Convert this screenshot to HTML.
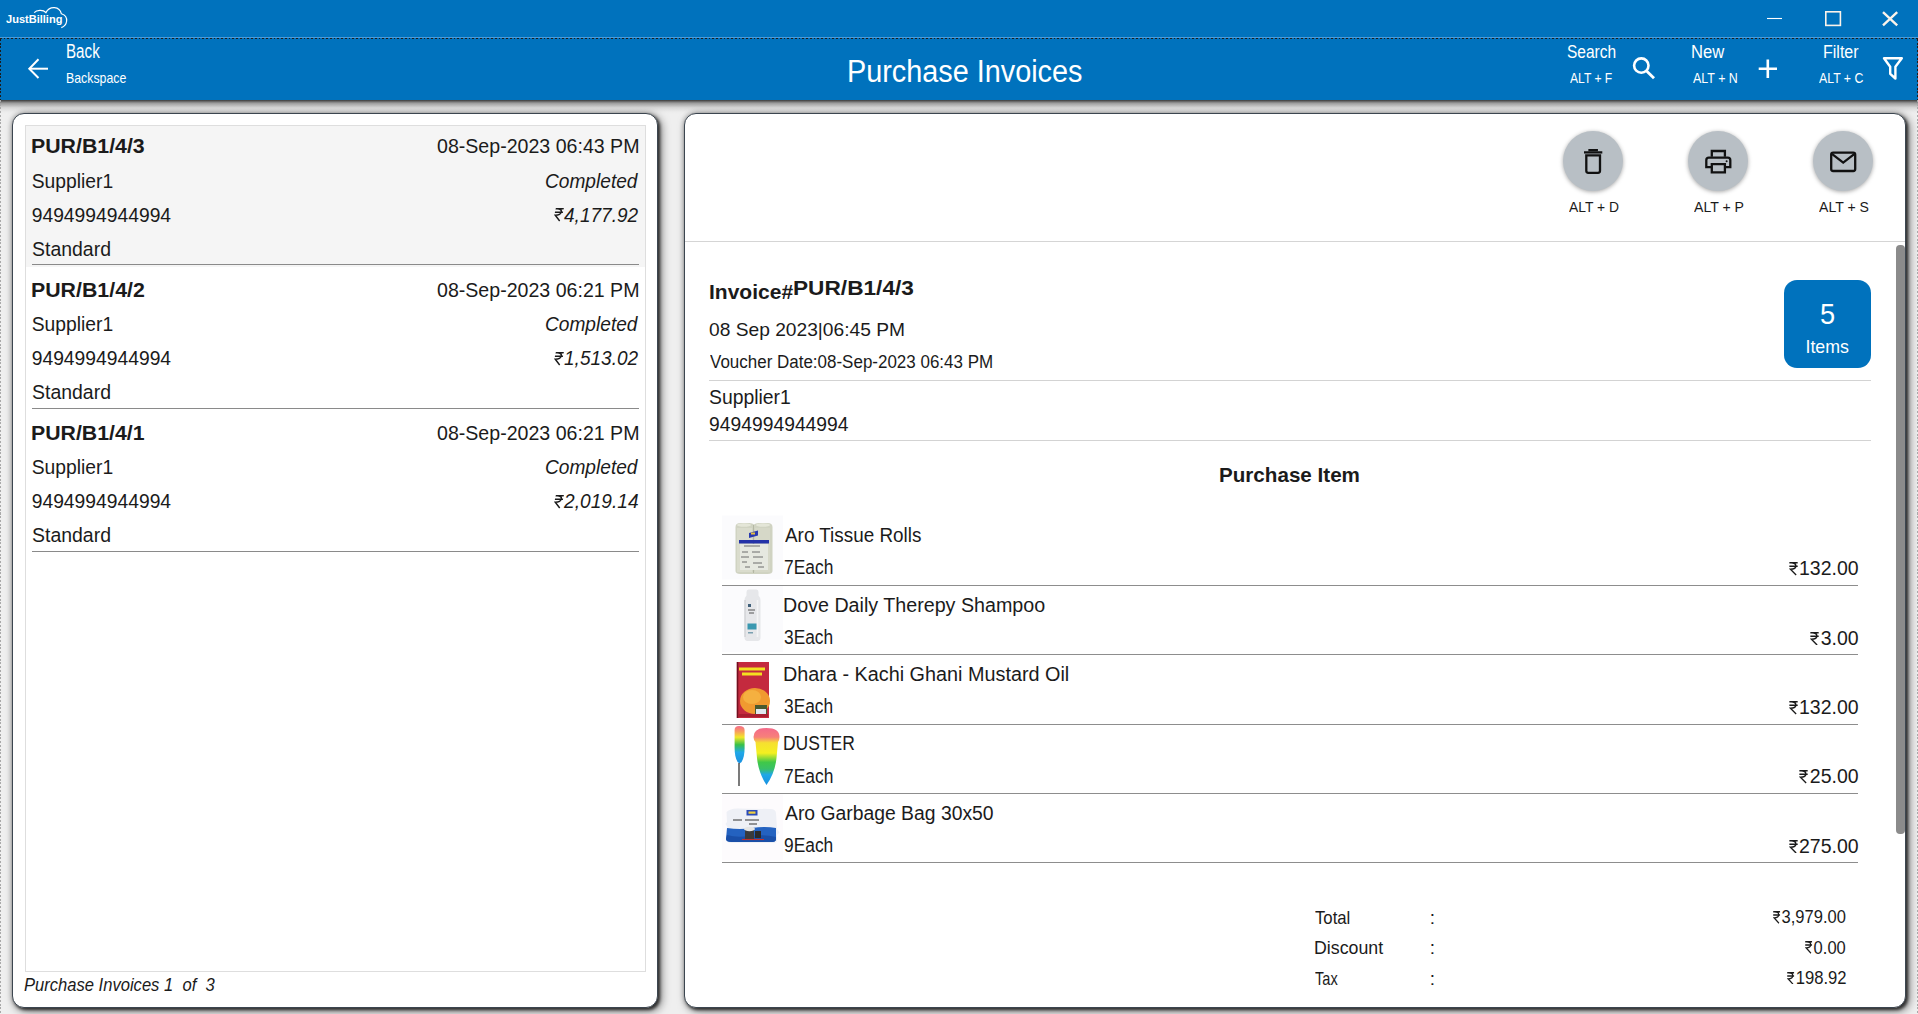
<!DOCTYPE html>
<html><head><meta charset="utf-8"><title>Purchase Invoices</title>
<style>
html,body{margin:0;padding:0;width:1918px;height:1014px;overflow:hidden;background:#efefef}
body{position:relative;font-family:"Liberation Sans", sans-serif}
.t{position:absolute;white-space:nowrap;transform-origin:0 0;font-family:"Liberation Sans", sans-serif}
</style></head><body>
<div style="position:absolute;left:0;top:0;width:1918px;height:1014px;background:#efefef;overflow:hidden">
<div style="position:absolute;left:0px;top:100px;width:1918px;height:14px;background:linear-gradient(#3a3a3a,#9a9a9a 22%,#d8d8d8 55%,#ececec 85%,#efefef)"></div>
<div style="position:absolute;left:0px;top:0px;width:1918px;height:100px;background:#0072BD"></div>
<div style="position:absolute;left:0px;top:37px;width:1918px;height:1px;background:#4f9bd6"></div>
<div style="position:absolute;left:0px;top:38px;width:1918px;height:1px;background:repeating-linear-gradient(90deg,#1c1c1c 0 1.6px,transparent 1.6px 3.75px)"></div>
<div style="position:absolute;left:0px;top:39px;width:1px;height:61px;background:repeating-linear-gradient(180deg,#1c1c1c 0 2px,transparent 2px 3.75px)"></div>
<div style="position:absolute;left:1917px;top:39px;width:1px;height:61px;background:repeating-linear-gradient(180deg,#1c1c1c 0 2px,transparent 2px 3.75px)"></div>
<div style="position:absolute;left:12px;top:113px;width:646px;height:895px;background:#fff;border:1.5px solid #3c4650;border-radius:12px;box-sizing:border-box;box-shadow:2px 2px 3px rgba(0,0,0,.6),3px 3px 10px rgba(0,0,0,.55),0 0 5px rgba(0,0,0,.3);"></div>
<div style="position:absolute;left:684px;top:113px;width:1222px;height:895px;background:#fff;border:1.5px solid #3c4650;border-radius:12px;box-sizing:border-box;box-shadow:2px 2px 3px rgba(0,0,0,.6),3px 3px 10px rgba(0,0,0,.55),0 0 5px rgba(0,0,0,.3);"></div>
<div style="position:absolute;left:0px;top:100px;width:1px;height:914px;background:repeating-linear-gradient(180deg,#a9a9a9 0 2px,transparent 2px 3.75px)"></div>
<div style="position:absolute;left:1917px;top:100px;width:1px;height:914px;background:repeating-linear-gradient(180deg,#a9a9a9 0 2px,transparent 2px 3.75px)"></div>
<div style="position:absolute;left:25px;top:125px;width:621px;height:847px;border:1px solid #dedede;box-sizing:border-box;background:#fff"></div>
<div style="position:absolute;left:26px;top:126px;width:619px;height:141px;background:#f5f5f5"></div>
<div class="t" style="left:31.17px;top:137.46px;font-size:19.3px;line-height:19.3px;color:#1b1b1b;font-weight:bold;transform:scaleX(1.1051);">PUR/B1/4/3</div>
<div class="t" style="left:437.23px;top:137.46px;font-size:19.3px;line-height:19.3px;color:#1b1b1b;transform:scaleX(1.0156);">08-Sep-2023 06:43 PM</div>
<div class="t" style="left:31.72px;top:171.56px;font-size:19.3px;line-height:19.3px;color:#1b1b1b;">Supplier1</div>
<div class="t" style="left:545.24px;top:171.56px;font-size:19.3px;line-height:19.3px;color:#1b1b1b;font-style:italic;transform:scaleX(0.9916);">Completed</div>
<div class="t" style="left:31.69px;top:205.56px;font-size:19.3px;line-height:19.3px;color:#1b1b1b;">9494994944994</div>
<div class="t" style="left:553.42px;top:205.56px;font-size:19.3px;line-height:19.3px;color:#1b1b1b;padding-left:11.19px;font-style:italic;transform:scaleX(0.9866);"><svg style="position:absolute;left:0.90px;top:2.83px;width:8.96px;height:13.51px;transform:skewX(-12deg);" viewBox="0 0 10 14" preserveAspectRatio="none"><path d="M0.4 0.8H9.6M0.4 4.4H9.6M2.4 0.8c3.8 0 5.2 1.1 5.2 3.4S5.9 7.5 1.6 7.5L7.9 13.4" fill="none" stroke="currentColor" stroke-width="1.5"/></svg>4,177.92</div>
<div class="t" style="left:31.72px;top:239.56px;font-size:19.3px;line-height:19.3px;color:#1b1b1b;transform:scaleX(1.0090);">Standard</div>
<div style="position:absolute;left:32px;top:264px;width:607px;height:1.4px;background:#8a8a8a"></div>
<div class="t" style="left:31.17px;top:280.66px;font-size:19.3px;line-height:19.3px;color:#1b1b1b;font-weight:bold;transform:scaleX(1.1059);">PUR/B1/4/2</div>
<div class="t" style="left:437.23px;top:280.66px;font-size:19.3px;line-height:19.3px;color:#1b1b1b;transform:scaleX(1.0156);">08-Sep-2023 06:21 PM</div>
<div class="t" style="left:31.72px;top:314.76px;font-size:19.3px;line-height:19.3px;color:#1b1b1b;">Supplier1</div>
<div class="t" style="left:545.24px;top:314.76px;font-size:19.3px;line-height:19.3px;color:#1b1b1b;font-style:italic;transform:scaleX(0.9916);">Completed</div>
<div class="t" style="left:31.69px;top:348.76px;font-size:19.3px;line-height:19.3px;color:#1b1b1b;">9494994944994</div>
<div class="t" style="left:553.42px;top:348.76px;font-size:19.3px;line-height:19.3px;color:#1b1b1b;padding-left:11.19px;font-style:italic;transform:scaleX(0.9866);"><svg style="position:absolute;left:0.90px;top:2.83px;width:8.96px;height:13.51px;transform:skewX(-12deg);" viewBox="0 0 10 14" preserveAspectRatio="none"><path d="M0.4 0.8H9.6M0.4 4.4H9.6M2.4 0.8c3.8 0 5.2 1.1 5.2 3.4S5.9 7.5 1.6 7.5L7.9 13.4" fill="none" stroke="currentColor" stroke-width="1.5"/></svg>1,513.02</div>
<div class="t" style="left:31.72px;top:382.76px;font-size:19.3px;line-height:19.3px;color:#1b1b1b;transform:scaleX(1.0090);">Standard</div>
<div style="position:absolute;left:32px;top:408px;width:607px;height:1.4px;background:#8a8a8a"></div>
<div class="t" style="left:31.18px;top:423.86px;font-size:19.3px;line-height:19.3px;color:#1b1b1b;font-weight:bold;transform:scaleX(1.1034);">PUR/B1/4/1</div>
<div class="t" style="left:437.23px;top:423.86px;font-size:19.3px;line-height:19.3px;color:#1b1b1b;transform:scaleX(1.0156);">08-Sep-2023 06:21 PM</div>
<div class="t" style="left:31.72px;top:457.96px;font-size:19.3px;line-height:19.3px;color:#1b1b1b;">Supplier1</div>
<div class="t" style="left:545.24px;top:457.96px;font-size:19.3px;line-height:19.3px;color:#1b1b1b;font-style:italic;transform:scaleX(0.9916);">Completed</div>
<div class="t" style="left:31.69px;top:491.96px;font-size:19.3px;line-height:19.3px;color:#1b1b1b;">9494994944994</div>
<div class="t" style="left:553.41px;top:491.96px;font-size:19.3px;line-height:19.3px;color:#1b1b1b;padding-left:11.19px;font-style:italic;transform:scaleX(0.9917);"><svg style="position:absolute;left:0.90px;top:2.83px;width:8.96px;height:13.51px;transform:skewX(-12deg);" viewBox="0 0 10 14" preserveAspectRatio="none"><path d="M0.4 0.8H9.6M0.4 4.4H9.6M2.4 0.8c3.8 0 5.2 1.1 5.2 3.4S5.9 7.5 1.6 7.5L7.9 13.4" fill="none" stroke="currentColor" stroke-width="1.5"/></svg>2,019.14</div>
<div class="t" style="left:31.72px;top:525.96px;font-size:19.3px;line-height:19.3px;color:#1b1b1b;transform:scaleX(1.0090);">Standard</div>
<div style="position:absolute;left:32px;top:551px;width:607px;height:1.4px;background:#8a8a8a"></div>
<div class="t" style="left:24.49px;top:974.92px;font-size:19px;line-height:19px;color:#1b1b1b;font-style:italic;transform:scaleX(0.8721);">Purchase Invoices 1&nbsp; of&nbsp; 3</div>
<div style="position:absolute;left:685px;top:241px;width:1220px;height:1px;background:#d5d5d5"></div>
<div style="position:absolute;left:1563px;top:131px;width:60px;height:60px;border-radius:50%;background:#b8bfc5;box-shadow:0 1px 4px rgba(0,0,0,.35)"></div>
<div class="t" style="left:1568.72px;top:198.90px;font-size:15px;line-height:15px;color:#1b1b1b;transform:scaleX(0.9234);">ALT + D</div>
<div style="position:absolute;left:1688px;top:131px;width:60px;height:60px;border-radius:50%;background:#b8bfc5;box-shadow:0 1px 4px rgba(0,0,0,.35)"></div>
<div class="t" style="left:1693.72px;top:198.90px;font-size:15px;line-height:15px;color:#1b1b1b;transform:scaleX(0.9389);">ALT + P</div>
<div style="position:absolute;left:1813px;top:131px;width:60px;height:60px;border-radius:50%;background:#b8bfc5;box-shadow:0 1px 4px rgba(0,0,0,.35)"></div>
<div class="t" style="left:1818.72px;top:198.90px;font-size:15px;line-height:15px;color:#1b1b1b;transform:scaleX(0.9371);">ALT + S</div>
<svg style="position:absolute;left:0;top:0" width="1918" height="240" viewBox="0 0 1918 240">
<g fill="none" stroke="#111" stroke-width="2.3">
<path d="M1584 152.4H1602.3"/><path d="M1589.5 151.2V150.2H1596.8V151.2"/>
<path d="M1586.3 155.4V170.8q0 2 2 2H1598q2 0 2-2V155.4Z"/>
<path d="M1711.8 156.8V151H1724.9V156.8"/>
<path d="M1711.8 167.2H1706.3V160.3q0-2.6 2.6-2.6H1727.7q2.6 0 2.6 2.6V167.2H1724.9"/>
<path d="M1711.8 164.2H1724.9V172.4H1711.8Z"/>
<path d="M1831.2 154.6q0-2 2-2H1853.2q2 0 2 2V169q0 2-2 2H1833.2q-2 0-2-2Z"/>
<path d="M1832.2 154.2L1843.2 162.6L1854.2 154.2"/>
</g>
<circle cx="1726.6" cy="161.2" r="1" fill="#111"/>
</svg>
<div style="position:absolute;left:1896px;top:245px;width:9px;height:589px;background:#8b8b8b;border-radius:4px"></div>
<div class="t" style="left:708.59px;top:282.26px;font-size:20.6px;line-height:20.6px;color:#1b1b1b;font-weight:bold;transform:scaleX(1.0207);">Invoice#</div>
<div class="t" style="left:793.08px;top:278.46px;font-size:20.6px;line-height:20.6px;color:#1b1b1b;font-weight:bold;transform:scaleX(1.1003);">PUR/B1/4/3</div>
<div class="t" style="left:709.25px;top:321.26px;font-size:18.6px;line-height:18.6px;color:#1b1b1b;transform:scaleX(1.0320);">08 Sep 2023|06:45 PM</div>
<div class="t" style="left:709.93px;top:353.46px;font-size:18px;line-height:18px;color:#1b1b1b;transform:scaleX(0.9431);">Voucher Date:08-Sep-2023 06:43 PM</div>
<div style="position:absolute;left:709px;top:380px;width:1162px;height:1px;background:#d3d3d3"></div>
<div class="t" style="left:709.12px;top:387.96px;font-size:19.3px;line-height:19.3px;color:#1b1b1b;transform:scaleX(1.0047);">Supplier1</div>
<div class="t" style="left:709.10px;top:415.06px;font-size:19.3px;line-height:19.3px;color:#1b1b1b;">9494994944994</div>
<div style="position:absolute;left:709px;top:440px;width:1162px;height:1px;background:#d3d3d3"></div>
<div style="position:absolute;left:1783.5px;top:280px;width:87.5px;height:87.5px;border-radius:13px;background:#0072BD"></div>
<div class="t" style="left:1819.86px;top:298.83px;font-size:29.5px;line-height:29.5px;color:#fff;transform:scaleX(0.9223);">5</div>
<div class="t" style="left:1805.46px;top:338.53px;font-size:17.8px;line-height:17.8px;color:#fff;">Items</div>
<div class="t" style="left:1219.47px;top:463.92px;font-size:21px;line-height:21px;color:#1b1b1b;font-weight:bold;transform:scaleX(0.9818);">Purchase Item</div>
<div class="t" style="left:784.56px;top:525.17px;font-size:20px;line-height:20px;color:#1b1b1b;transform:scaleX(0.9438);">Aro Tissue Rolls</div>
<div class="t" style="left:783.71px;top:558.49px;font-size:19.5px;line-height:19.5px;color:#1b1b1b;transform:scaleX(0.8920);">7Each</div>
<div class="t" style="left:1787.71px;top:559.29px;font-size:19.5px;line-height:19.5px;color:#1b1b1b;padding-left:11.31px;"><svg style="position:absolute;left:0.90px;top:2.86px;width:9.05px;height:13.65px;" viewBox="0 0 10 14" preserveAspectRatio="none"><path d="M0.4 0.8H9.6M0.4 4.4H9.6M2.4 0.8c3.8 0 5.2 1.1 5.2 3.4S5.9 7.5 1.6 7.5L7.9 13.4" fill="none" stroke="currentColor" stroke-width="1.5"/></svg>132.00</div>
<div style="position:absolute;left:722px;top:585px;width:1136px;height:1.4px;background:#8d8d8d"></div>
<div class="t" style="left:782.99px;top:594.55px;font-size:20px;line-height:20px;color:#1b1b1b;transform:scaleX(0.9840);">Dove Daily Therepy Shampoo</div>
<div class="t" style="left:783.94px;top:627.87px;font-size:19.5px;line-height:19.5px;color:#1b1b1b;transform:scaleX(0.8877);">3Each</div>
<div class="t" style="left:1809.40px;top:628.67px;font-size:19.5px;line-height:19.5px;color:#1b1b1b;padding-left:11.31px;"><svg style="position:absolute;left:0.90px;top:2.86px;width:9.05px;height:13.65px;" viewBox="0 0 10 14" preserveAspectRatio="none"><path d="M0.4 0.8H9.6M0.4 4.4H9.6M2.4 0.8c3.8 0 5.2 1.1 5.2 3.4S5.9 7.5 1.6 7.5L7.9 13.4" fill="none" stroke="currentColor" stroke-width="1.5"/></svg>3.00</div>
<div style="position:absolute;left:722px;top:654px;width:1136px;height:1.4px;background:#8d8d8d"></div>
<div class="t" style="left:782.98px;top:663.92px;font-size:20px;line-height:20px;color:#1b1b1b;transform:scaleX(0.9905);">Dhara - Kachi Ghani Mustard Oil</div>
<div class="t" style="left:783.94px;top:697.24px;font-size:19.5px;line-height:19.5px;color:#1b1b1b;transform:scaleX(0.8877);">3Each</div>
<div class="t" style="left:1787.71px;top:698.04px;font-size:19.5px;line-height:19.5px;color:#1b1b1b;padding-left:11.31px;"><svg style="position:absolute;left:0.90px;top:2.86px;width:9.05px;height:13.65px;" viewBox="0 0 10 14" preserveAspectRatio="none"><path d="M0.4 0.8H9.6M0.4 4.4H9.6M2.4 0.8c3.8 0 5.2 1.1 5.2 3.4S5.9 7.5 1.6 7.5L7.9 13.4" fill="none" stroke="currentColor" stroke-width="1.5"/></svg>132.00</div>
<div style="position:absolute;left:722px;top:724px;width:1136px;height:1.4px;background:#8d8d8d"></div>
<div class="t" style="left:783.17px;top:733.30px;font-size:20px;line-height:20px;color:#1b1b1b;transform:scaleX(0.8737);">DUSTER</div>
<div class="t" style="left:783.71px;top:766.62px;font-size:19.5px;line-height:19.5px;color:#1b1b1b;transform:scaleX(0.8920);">7Each</div>
<div class="t" style="left:1798.55px;top:767.42px;font-size:19.5px;line-height:19.5px;color:#1b1b1b;padding-left:11.31px;"><svg style="position:absolute;left:0.90px;top:2.86px;width:9.05px;height:13.65px;" viewBox="0 0 10 14" preserveAspectRatio="none"><path d="M0.4 0.8H9.6M0.4 4.4H9.6M2.4 0.8c3.8 0 5.2 1.1 5.2 3.4S5.9 7.5 1.6 7.5L7.9 13.4" fill="none" stroke="currentColor" stroke-width="1.5"/></svg>25.00</div>
<div style="position:absolute;left:722px;top:793px;width:1136px;height:1.4px;background:#8d8d8d"></div>
<div class="t" style="left:784.56px;top:802.67px;font-size:20px;line-height:20px;color:#1b1b1b;transform:scaleX(0.9670);">Aro Garbage Bag 30x50</div>
<div class="t" style="left:783.79px;top:835.99px;font-size:19.5px;line-height:19.5px;color:#1b1b1b;transform:scaleX(0.8906);">9Each</div>
<div class="t" style="left:1787.71px;top:836.79px;font-size:19.5px;line-height:19.5px;color:#1b1b1b;padding-left:11.31px;"><svg style="position:absolute;left:0.90px;top:2.86px;width:9.05px;height:13.65px;" viewBox="0 0 10 14" preserveAspectRatio="none"><path d="M0.4 0.8H9.6M0.4 4.4H9.6M2.4 0.8c3.8 0 5.2 1.1 5.2 3.4S5.9 7.5 1.6 7.5L7.9 13.4" fill="none" stroke="currentColor" stroke-width="1.5"/></svg>275.00</div>
<div style="position:absolute;left:722px;top:862px;width:1136px;height:1.4px;background:#8d8d8d"></div>
<svg style="position:absolute;left:0;top:0" width="1918" height="1014" viewBox="0 0 1918 1014">
<defs>
<linearGradient id="dg" x1="0" y1="0" x2="0" y2="1">
<stop offset="0" stop-color="#f56a8c"/><stop offset="0.14" stop-color="#f89a60"/><stop offset="0.3" stop-color="#f2e828"/>
<stop offset="0.5" stop-color="#38c048"/><stop offset="0.7" stop-color="#20a8e8"/><stop offset="1" stop-color="#1a90e0"/></linearGradient>
<linearGradient id="dg2" x1="0" y1="0" x2="0" y2="1">
<stop offset="0" stop-color="#f46a8a"/><stop offset="0.16" stop-color="#f7807a"/><stop offset="0.26" stop-color="#f6e030"/><stop offset="0.44" stop-color="#f4f020"/>
<stop offset="0.6" stop-color="#40c848"/><stop offset="0.72" stop-color="#38c068"/><stop offset="0.82" stop-color="#20a8e8"/><stop offset="1" stop-color="#1890e0"/></linearGradient>
</defs>
<rect x="722" y="515.5" width="61" height="64" fill="#fbfbfd"/>
<rect x="722" y="586" width="61" height="66" fill="#fbfbfd"/>
<rect x="722" y="794.5" width="61" height="66" fill="#fdfbfd"/>
<!-- tissue rolls -->
<path d="M735.5 527q0-4 5-4h9q3 0 4.5 1.5q1.5-1.5 4.5-1.5h9q5 0 5 4v44q0 3-5 3h-27q-5 0-5-3z" fill="#d0d3c2"/>
<path d="M737 528h15v44h-15z" fill="#dadccd"/><path d="M755 528h15v44h-15z" fill="#d6d8c8"/>
<path d="M753.5 525v48" stroke="#b4b7a4" stroke-width="1"/>
<ellipse cx="744" cy="525" rx="7" ry="1.8" fill="#e4e6d8"/><ellipse cx="763" cy="525" rx="7" ry="1.8" fill="#e4e6d8"/>
<path d="M749 533l9-2.5v5l-9 2.5z" fill="#2a3ab0"/><rect x="751" y="532.5" width="4" height="2" fill="#e8c040"/>
<rect x="739" y="540" width="30" height="3.5" fill="#2432a8"/>
<rect x="740" y="544" width="28" height="26" fill="#e6e8e0"/>
<path d="M744 546h16M742 552h6M752 552h8M741 557h8M753 557h10M742 562h5M753 563h9M745 567h5M758 567h6" stroke="#606060" stroke-width="0.9"/>
<!-- shampoo -->
<path d="M746.5 592q0-2.5 2-2.5h8q2 0 2 2.5v3.5q2 2 2 5v37q0 3-2.5 3.5h-11q-2.5-0.5-2.5-3.5v-37q0-3 2-5z" fill="#e6e7ea"/>
<path d="M745 600v37" stroke="#c8c9cc" stroke-width="1"/>
<path d="M757.5 600v37" stroke="#f4f4f6" stroke-width="1.5"/>
<rect x="748" y="604" width="3" height="3" fill="#40607a"/><path d="M748 610h7M749 613h5" stroke="#555" stroke-width="1"/>
<rect x="747.5" y="623.5" width="9" height="6" fill="#3a98b0"/><rect x="748" y="632" width="5" height="1.5" fill="#7aa0b0"/>
<!-- mustard oil -->
<rect x="736.8" y="662" width="32.2" height="56" fill="#c42a3e"/>
<rect x="736.8" y="662" width="1.5" height="56" fill="#701020"/>
<path d="M739 669h26M742 674h20" stroke="#f4e020" stroke-width="3"/>
<ellipse cx="755" cy="701" rx="15" ry="13" fill="#f09a30"/>
<ellipse cx="752" cy="697" rx="9" ry="7" fill="#f5b040"/>
<rect x="755" y="705" width="12" height="10" fill="#4a5a30"/><rect x="756" y="709" width="10" height="6" fill="#e0e8f0"/>
<rect x="738" y="714" width="30" height="3" fill="#a81e30"/>
<!-- duster -->
<path d="M734.6 730q0-4 4.5-4q5.5 0 5.5 4v18q0 9-3 14l-2 1.5l-2-1.5q-3-5-3-14z" fill="url(#dg)"/>
<path d="M739 763v23" stroke="#222" stroke-width="1.2"/>
<path d="M753.5 737q0-9 13-9q13 0 13 9q0 3-1.5 5l-1.5 16q-1.5 15-10 27q-8-12-9.5-27l-1.5-16q-2-2-2-5z" fill="url(#dg2)"/>
<!-- garbage bag -->
<path d="M726.5 812q4-4 12-3.5l32 0.5q5 0 5.5 4l1 16l2.5 3.5l-2.5 2.5v5q0 3-4 3h-41q-5.5 0-5.5-3l1-13l-2-3l1.5-2z" fill="#eef0f6"/>
<path d="M727 828q13 2 25 0q13-2 24 0v11q0 3-4 3h-40q-6 0-6-3z" fill="#2462c0"/>
<path d="M727 835q10 3 22 1q14-2 27 1v2q0 3-4 3h-40q-6 0-6-3z" fill="#1a4fa8"/>
<rect x="746.5" y="810" width="11" height="5.5" fill="#2a4ab8"/><rect x="748.5" y="811.5" width="7" height="2.2" fill="#f0d040"/>
<path d="M733 820h9M745 820h14M749 824h8" stroke="#333" stroke-width="1"/>
<rect x="745" y="829" width="9" height="10" fill="#3a3a3a"/><ellipse cx="749.5" cy="829" rx="5.5" ry="2.2" fill="#e4e4e4"/>
<rect x="755" y="831" width="6" height="7" fill="#2a2a2a"/>
<path d="M742 839.5h22" stroke="#c03030" stroke-width="1.1"/>
</svg>
<div class="t" style="left:1314.92px;top:907.92px;font-size:19px;line-height:19px;color:#1b1b1b;transform:scaleX(0.8806);">Total</div>
<div class="t" style="left:1429.87px;top:907.92px;font-size:19px;line-height:19px;color:#1b1b1b;">:</div>
<div class="t" style="left:1772.13px;top:908.19px;font-size:18.2px;line-height:18.2px;color:#1b1b1b;padding-left:10.56px;transform:scaleX(0.9080);"><svg style="position:absolute;left:0.84px;top:2.67px;width:8.44px;height:12.74px;" viewBox="0 0 10 14" preserveAspectRatio="none"><path d="M0.4 0.8H9.6M0.4 4.4H9.6M2.4 0.8c3.8 0 5.2 1.1 5.2 3.4S5.9 7.5 1.6 7.5L7.9 13.4" fill="none" stroke="currentColor" stroke-width="1.5"/></svg>3,979.00</div>
<div class="t" style="left:1313.84px;top:938.37px;font-size:19px;line-height:19px;color:#1b1b1b;transform:scaleX(0.9346);">Discount</div>
<div class="t" style="left:1429.87px;top:938.37px;font-size:19px;line-height:19px;color:#1b1b1b;">:</div>
<div class="t" style="left:1804.23px;top:938.64px;font-size:18.2px;line-height:18.2px;color:#1b1b1b;padding-left:10.56px;transform:scaleX(0.9094);"><svg style="position:absolute;left:0.84px;top:2.67px;width:8.44px;height:12.74px;" viewBox="0 0 10 14" preserveAspectRatio="none"><path d="M0.4 0.8H9.6M0.4 4.4H9.6M2.4 0.8c3.8 0 5.2 1.1 5.2 3.4S5.9 7.5 1.6 7.5L7.9 13.4" fill="none" stroke="currentColor" stroke-width="1.5"/></svg>0.00</div>
<div class="t" style="left:1314.97px;top:968.82px;font-size:19px;line-height:19px;color:#1b1b1b;transform:scaleX(0.7667);">Tax</div>
<div class="t" style="left:1429.87px;top:968.82px;font-size:19px;line-height:19px;color:#1b1b1b;">:</div>
<div class="t" style="left:1785.63px;top:969.09px;font-size:18.2px;line-height:18.2px;color:#1b1b1b;padding-left:10.56px;transform:scaleX(0.9153);"><svg style="position:absolute;left:0.84px;top:2.67px;width:8.44px;height:12.74px;" viewBox="0 0 10 14" preserveAspectRatio="none"><path d="M0.4 0.8H9.6M0.4 4.4H9.6M2.4 0.8c3.8 0 5.2 1.1 5.2 3.4S5.9 7.5 1.6 7.5L7.9 13.4" fill="none" stroke="currentColor" stroke-width="1.5"/></svg>198.92</div>
</div>
<svg style="position:absolute;left:0;top:0" width="1918" height="100" viewBox="0 0 1918 100">
<g fill="none" stroke="#fff">
<path d="M29.5 68.7H48" stroke-width="2"/><path d="M38.5 59.3L29.3 68.7L38.5 78" stroke-width="2"/>
<circle cx="1641.3" cy="65.6" r="7.2" stroke-width="2.6"/><path d="M1646.6 70.9L1654 78.3" stroke-width="2.8"/>
<path d="M1758.7 68.8H1777M1767.8 59.4V78" stroke-width="2.6"/>
<path d="M1884 58.3H1901.8L1895.4 66.8V78.5L1890.2 73.8V66.8Z" stroke-width="2.4" stroke-linejoin="round"/>
<path d="M1767 18.5H1782" stroke-width="1.1"/>
<rect x="1825.8" y="11.8" width="14.6" height="13.6" stroke-width="1.6" stroke="#fbf3ea"/>
<path d="M1883 12.2L1897.2 25.4M1897.2 12.2L1883 25.4" stroke-width="2.4" stroke="#fbf3ea"/>
<path d="M34.2 12.6C36.5 10 43 9.2 45.9 12.6C48 8.7 51.5 7.5 54.5 7.7C58 8 60.6 10.4 61.4 13.8C65 15 67 18 66.6 21.2C66.2 24.5 64 26.6 61.3 27.6" stroke-width="1.2"/>
</g>
</svg>
<div class="t" style="left:5.83px;top:14.27px;font-size:11.5px;line-height:11.5px;color:#fff;font-weight:bold;transform:scaleX(0.9596);">JustBilling</div>
<div class="t" style="left:66.26px;top:42.16px;font-size:19.6px;line-height:19.6px;color:#fff;transform:scaleX(0.7739);">Back</div>
<div class="t" style="left:65.69px;top:71.48px;font-size:14.5px;line-height:14.5px;color:#fff;transform:scaleX(0.8496);">Backspace</div>
<div class="t" style="left:846.64px;top:55.86px;font-size:31px;line-height:31px;color:#fff;transform:scaleX(0.9294);">Purchase Invoices</div>
<div class="t" style="left:1567.30px;top:42.60px;font-size:18.9px;line-height:18.9px;color:#fff;transform:scaleX(0.8201);">Search</div>
<div class="t" style="left:1570.08px;top:70.96px;font-size:14.7px;line-height:14.7px;color:#fff;transform:scaleX(0.8238);">ALT + F</div>
<div class="t" style="left:1691.44px;top:42.60px;font-size:18.9px;line-height:18.9px;color:#fff;transform:scaleX(0.8787);">New</div>
<div class="t" style="left:1692.78px;top:70.96px;font-size:14.7px;line-height:14.7px;color:#fff;transform:scaleX(0.8474);">ALT + N</div>
<div class="t" style="left:1823.49px;top:42.60px;font-size:18.9px;line-height:18.9px;color:#fff;transform:scaleX(0.8471);">Filter</div>
<div class="t" style="left:1818.78px;top:70.96px;font-size:14.7px;line-height:14.7px;color:#fff;transform:scaleX(0.8374);">ALT + C</div>
</body></html>
